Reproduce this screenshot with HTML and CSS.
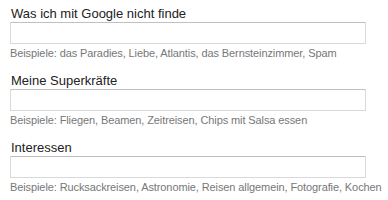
FILE: index.html
```html
<!DOCTYPE html>
<html lang="de">
<head>
<meta charset="utf-8">
<link rel="stylesheet" href="styles.css">
</head>
<body>
<div class="form">
  <div class="field">
    <label class="label">Was ich mit Google nicht finde</label>
    <input class="input" type="text">
    <div class="hint">Beispiele: das Paradies, Liebe, Atlantis, das Bernsteinzimmer, Spam</div>
  </div>
  <div class="field">
    <label class="label">Meine Superkräfte</label>
    <input class="input" type="text">
    <div class="hint">Beispiele: Fliegen, Beamen, Zeitreisen, Chips mit Salsa essen</div>
  </div>
  <div class="field">
    <label class="label">Interessen</label>
    <input class="input" type="text">
    <div class="hint">Beispiele: Rucksackreisen, Astronomie, Reisen allgemein, Fotografie, Kochen</div>
  </div>
</div>
</body>
</html>
```
FILE: styles.css
```css
html, body {
  margin: 0;
  padding: 0;
  background: #fff;
}
.form {
  display: flex;
  flex-direction: column;
  gap: 13px;
  padding: 6px 0 0 10px;
  font-family: "Liberation Sans", Arial, sans-serif;
}
.field {
  display: flex;
  flex-direction: column;
  width: 356px;
}
.label {
  display: block;
  font-size: 13px;
  line-height: 16px;
  color: #222;
  padding-left: 1px;
}
.input {
  box-sizing: border-box;
  width: 356px;
  height: 22px;
  margin: 0;
  padding: 0 4px;
  border: 1px solid #d9d9d9;
  border-top-color: #c0c0c0;
  border-radius: 1px;
  background: #fff;
  outline: none;
  font: inherit;
}
.hint {
  margin-top: 2px;
  font-size: 11px;
  line-height: 14px;
  letter-spacing: -0.1px;
  color: #777;
  white-space: nowrap;
}
```
